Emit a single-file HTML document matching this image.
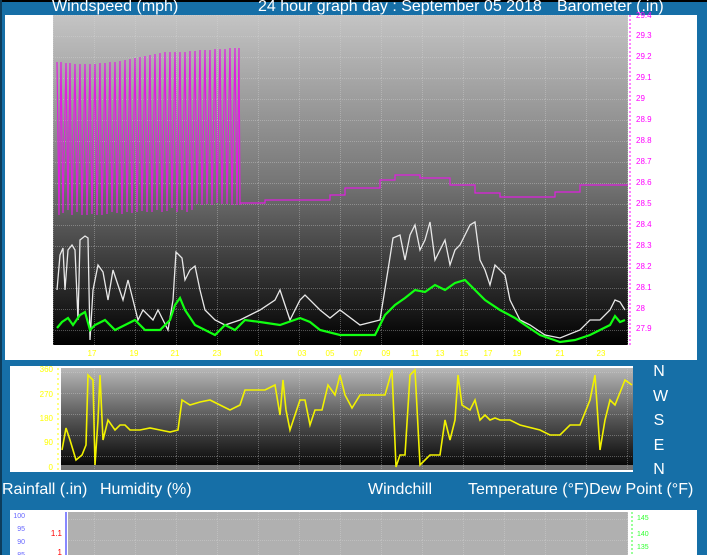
<!DOCTYPE html>
<html><head><meta charset="utf-8"><style>
html,body{margin:0;padding:0}
body{width:707px;height:555px;overflow:hidden;background:#166fa7;position:relative;font-family:"Liberation Sans",sans-serif;}
.t{position:absolute;color:#fff;font-size:16px;line-height:16px;white-space:nowrap}
svg{position:absolute;left:0;top:0}
</style></head><body>
<div style="position:absolute;left:0;top:0;width:707px;height:2px;background:#000"></div>
<div style="position:absolute;left:0;top:0;width:2px;height:555px;background:#0d3d5c"></div>
<div class="t" style="left:52px;top:-1px">Windspeed (mph)</div>
<div class="t" style="left:258px;top:-1px">24 hour graph day : September 05 2018</div>
<div class="t" style="left:557px;top:-1px">Barometer (.in)</div>
<div class="t" style="left:2px;top:482px">Rainfall (.in)</div>
<div class="t" style="left:100px;top:482px">Humidity (%)</div>
<div class="t" style="left:368px;top:482px">Windchill</div>
<div class="t" style="left:468px;top:482px">Temperature (°F)Dew Point (°F)</div>
<div class="t" style="left:653px;top:360px;line-height:24.6px;text-align:center;width:12px">N<br>W<br>S<br>E<br>N</div>
<svg width="707" height="555" viewBox="0 0 707 555">
<defs>
<linearGradient id="g1" x1="0" y1="0" x2="0" y2="1"><stop offset="0" stop-color="#c4c4c4"/><stop offset="0.5" stop-color="#777"/><stop offset="1" stop-color="#000"/></linearGradient>
<linearGradient id="g2" x1="0" y1="0" x2="0" y2="1"><stop offset="0" stop-color="#b8b8b8"/><stop offset="0.5" stop-color="#555"/><stop offset="1" stop-color="#000"/></linearGradient>
<pattern id="gr" width="41" height="21" patternUnits="userSpaceOnUse" x="53" y="15"><path d="M0 0.5H41M0.5 0V21" stroke="#d8d8d8" stroke-opacity="0.35" stroke-dasharray="1 1"/></pattern>
</defs>
<rect x="5" y="15" width="692" height="345" fill="#fff"/>
<rect x="53" y="15" width="575" height="330" fill="url(#g1)"/>
<rect x="53" y="15" width="575" height="330" fill="url(#gr)"/>
<line x1="630" y1="15" x2="630" y2="345" stroke="#f0f" stroke-dasharray="2 2"/>
<g fill="#f0f" font-size="8" font-family="Liberation Sans">
<text x="636" y="18">29.4</text><text x="636" y="38">29.3</text><text x="636" y="59">29.2</text><text x="636" y="80">29.1</text><text x="636" y="101">29</text><text x="636" y="122">28.9</text><text x="636" y="143">28.8</text><text x="636" y="164">28.7</text><text x="636" y="185">28.6</text><text x="636" y="206">28.5</text><text x="636" y="227">28.4</text><text x="636" y="248">28.3</text><text x="636" y="269">28.2</text><text x="636" y="290">28.1</text><text x="636" y="311">28</text><text x="636" y="331">27.9</text>
</g>
<g fill="#ff0" font-size="8" font-family="Liberation Sans" text-anchor="middle">
<text x="92" y="356">17</text><text x="134" y="356">19</text><text x="175" y="356">21</text><text x="217" y="356">23</text><text x="259" y="356">01</text><text x="302" y="356">03</text><text x="330" y="356">05</text><text x="358" y="356">07</text><text x="386" y="356">09</text><text x="415" y="356">11</text><text x="440" y="356">13</text><text x="464" y="356">15</text><text x="488" y="356">17</text><text x="517" y="356">19</text><text x="560" y="356">21</text><text x="601" y="356">23</text>
</g>
<path fill="none" stroke="#e01ee0" stroke-width="1.2" d="M57 62 L59 215 L61 62 L63 213 L66 63 L68 210 L70 63 L72 215 L75 64 L77 212 L80 64 L82 215 L85 64 L87 215 L90 64 L92 214 L95 64 L97 215 L100 63 L102 215 L105 63 L107 214 L110 62 L112 212 L115 62 L117 213 L120 61 L122 214 L125 60 L127 212 L130 59 L132 213 L135 58 L137 212 L140 57 L142 211 L145 56 L147 212 L150 55 L152 212 L155 54 L157 210 L160 53 L162 212 L165 52 L167 211 L170 52 L172 208 L175 52 L177 212 L180 52 L182 210 L185 52 L187 212 L190 51 L192 210 L195 51 L197 204 L200 50 L202 205 L205 50 L207 204 L210 50 L212 205 L215 49 L217 203 L220 49 L222 204 L225 49 L227 204 L230 48 L232 205 L235 48 L237 205 L239 48 L240 205 L240 203 L265 203 L265 200 L330 200 L330 195 L345 195 L345 188 L380 188 L380 180 L395 180 L395 175 L420 175 L420 178 L450 178 L450 185 L475 185 L475 193 L500 193 L500 197 L555 197 L555 192 L580 192 L580 185 L628 185"/>
<polyline fill="none" stroke="#e8e8e8" stroke-width="1.3" points="57,290 60,255 63,248 65,290 68,250 72,245 75,250 78,320 80,240 85,236 88,238 90,340 93,290 98,265 103,272 108,300 113,270 118,285 123,300 128,280 133,300 138,320 143,310 153,320 158,310 168,330 173,300 176,252 182,258 185,280 190,270 195,266 200,290 205,310 215,320 225,325 240,320 260,310 275,300 280,290 290,320 300,300 305,295 320,310 330,318 340,310 360,325 380,320 388,270 393,238 400,235 405,260 410,235 415,225 420,250 425,240 430,222 435,260 440,250 445,240 450,265 455,250 460,245 465,235 470,225 475,222 480,260 485,270 490,285 495,265 505,275 510,300 520,320 530,325 545,335 560,338 580,330 590,320 600,320 610,310 615,300 620,302 625,310"/>
<polyline fill="none" stroke="#1f1" stroke-width="2.2" points="57,328 62,322 68,318 73,325 80,315 85,312 90,330 95,325 105,320 115,330 125,325 135,320 145,330 160,330 170,320 175,305 180,298 185,310 195,325 205,330 215,335 225,325 235,330 245,320 260,322 280,325 300,318 310,322 320,330 340,335 360,335 375,335 385,315 395,305 405,298 415,290 425,292 435,285 445,290 455,283 465,280 475,290 485,300 500,310 515,318 525,325 540,335 560,342 575,340 590,335 600,330 610,325 615,316 620,322 625,320"/>
<rect x="10" y="366" width="623" height="106" fill="#fff"/>
<rect x="61" y="368" width="572" height="102" fill="url(#g2)"/>
<rect x="61" y="368" width="572" height="102" fill="url(#gr)"/>
<rect x="61" y="465" width="572" height="5" fill="#bbb" opacity="0.6"/>
<line x1="58" y1="368" x2="58" y2="470" stroke="#ff0" stroke-dasharray="2 3"/>
<g fill="#ff0" font-size="8" font-family="Liberation Sans" text-anchor="end">
<text x="53" y="372">360</text><text x="53" y="397">270</text><text x="53" y="421">180</text><text x="53" y="445">90</text><text x="53" y="470">0</text>
</g>
<polyline fill="none" stroke="#f2f200" stroke-width="1.6" points="62,450 66,428 70,440 76,460 82,455 86,445 88,375 93,380 95,465 98,420 100,375 103,440 108,420 115,430 120,425 125,425 130,430 140,430 150,428 160,430 170,432 178,430 182,400 190,405 200,402 210,400 220,405 230,410 240,405 245,390 250,390 265,390 275,385 280,415 283,380 286,410 290,430 295,415 300,400 305,400 310,425 315,410 322,410 328,385 335,395 340,375 345,395 352,408 360,395 385,395 392,370 396,467 400,455 405,455 410,375 415,370 420,465 430,455 440,455 445,420 450,440 455,420 458,375 462,405 470,410 475,400 480,420 485,415 490,420 495,418 500,420 510,420 520,425 540,430 550,435 560,435 570,425 580,425 590,400 595,375 600,450 605,420 610,400 615,405 625,380 632,385"/>
<rect x="10" y="510" width="687" height="45" fill="#fff"/>
<rect x="68" y="512" width="560" height="43" fill="#b0b0b0"/>
<rect x="68" y="512" width="560" height="43" fill="url(#gr)"/>
<line x1="66" y1="512" x2="66" y2="555" stroke="#88f" stroke-width="2"/>
<line x1="632" y1="512" x2="632" y2="555" stroke="#3f3" stroke-dasharray="2 2"/>
<g fill="#66f" font-size="7" font-family="Liberation Sans" text-anchor="end"><text x="25" y="518">100</text><text x="25" y="531">95</text><text x="25" y="544">90</text><text x="25" y="557">85</text></g>
<g fill="#f00" font-size="8" font-family="Liberation Sans" text-anchor="end"><text x="62" y="536">1.1</text><text x="62" y="555">1</text></g>
<g fill="#3f3" font-size="7" font-family="Liberation Sans"><text x="637" y="520">145</text><text x="637" y="536">140</text><text x="637" y="549">135</text></g>
</svg>
</body></html>
